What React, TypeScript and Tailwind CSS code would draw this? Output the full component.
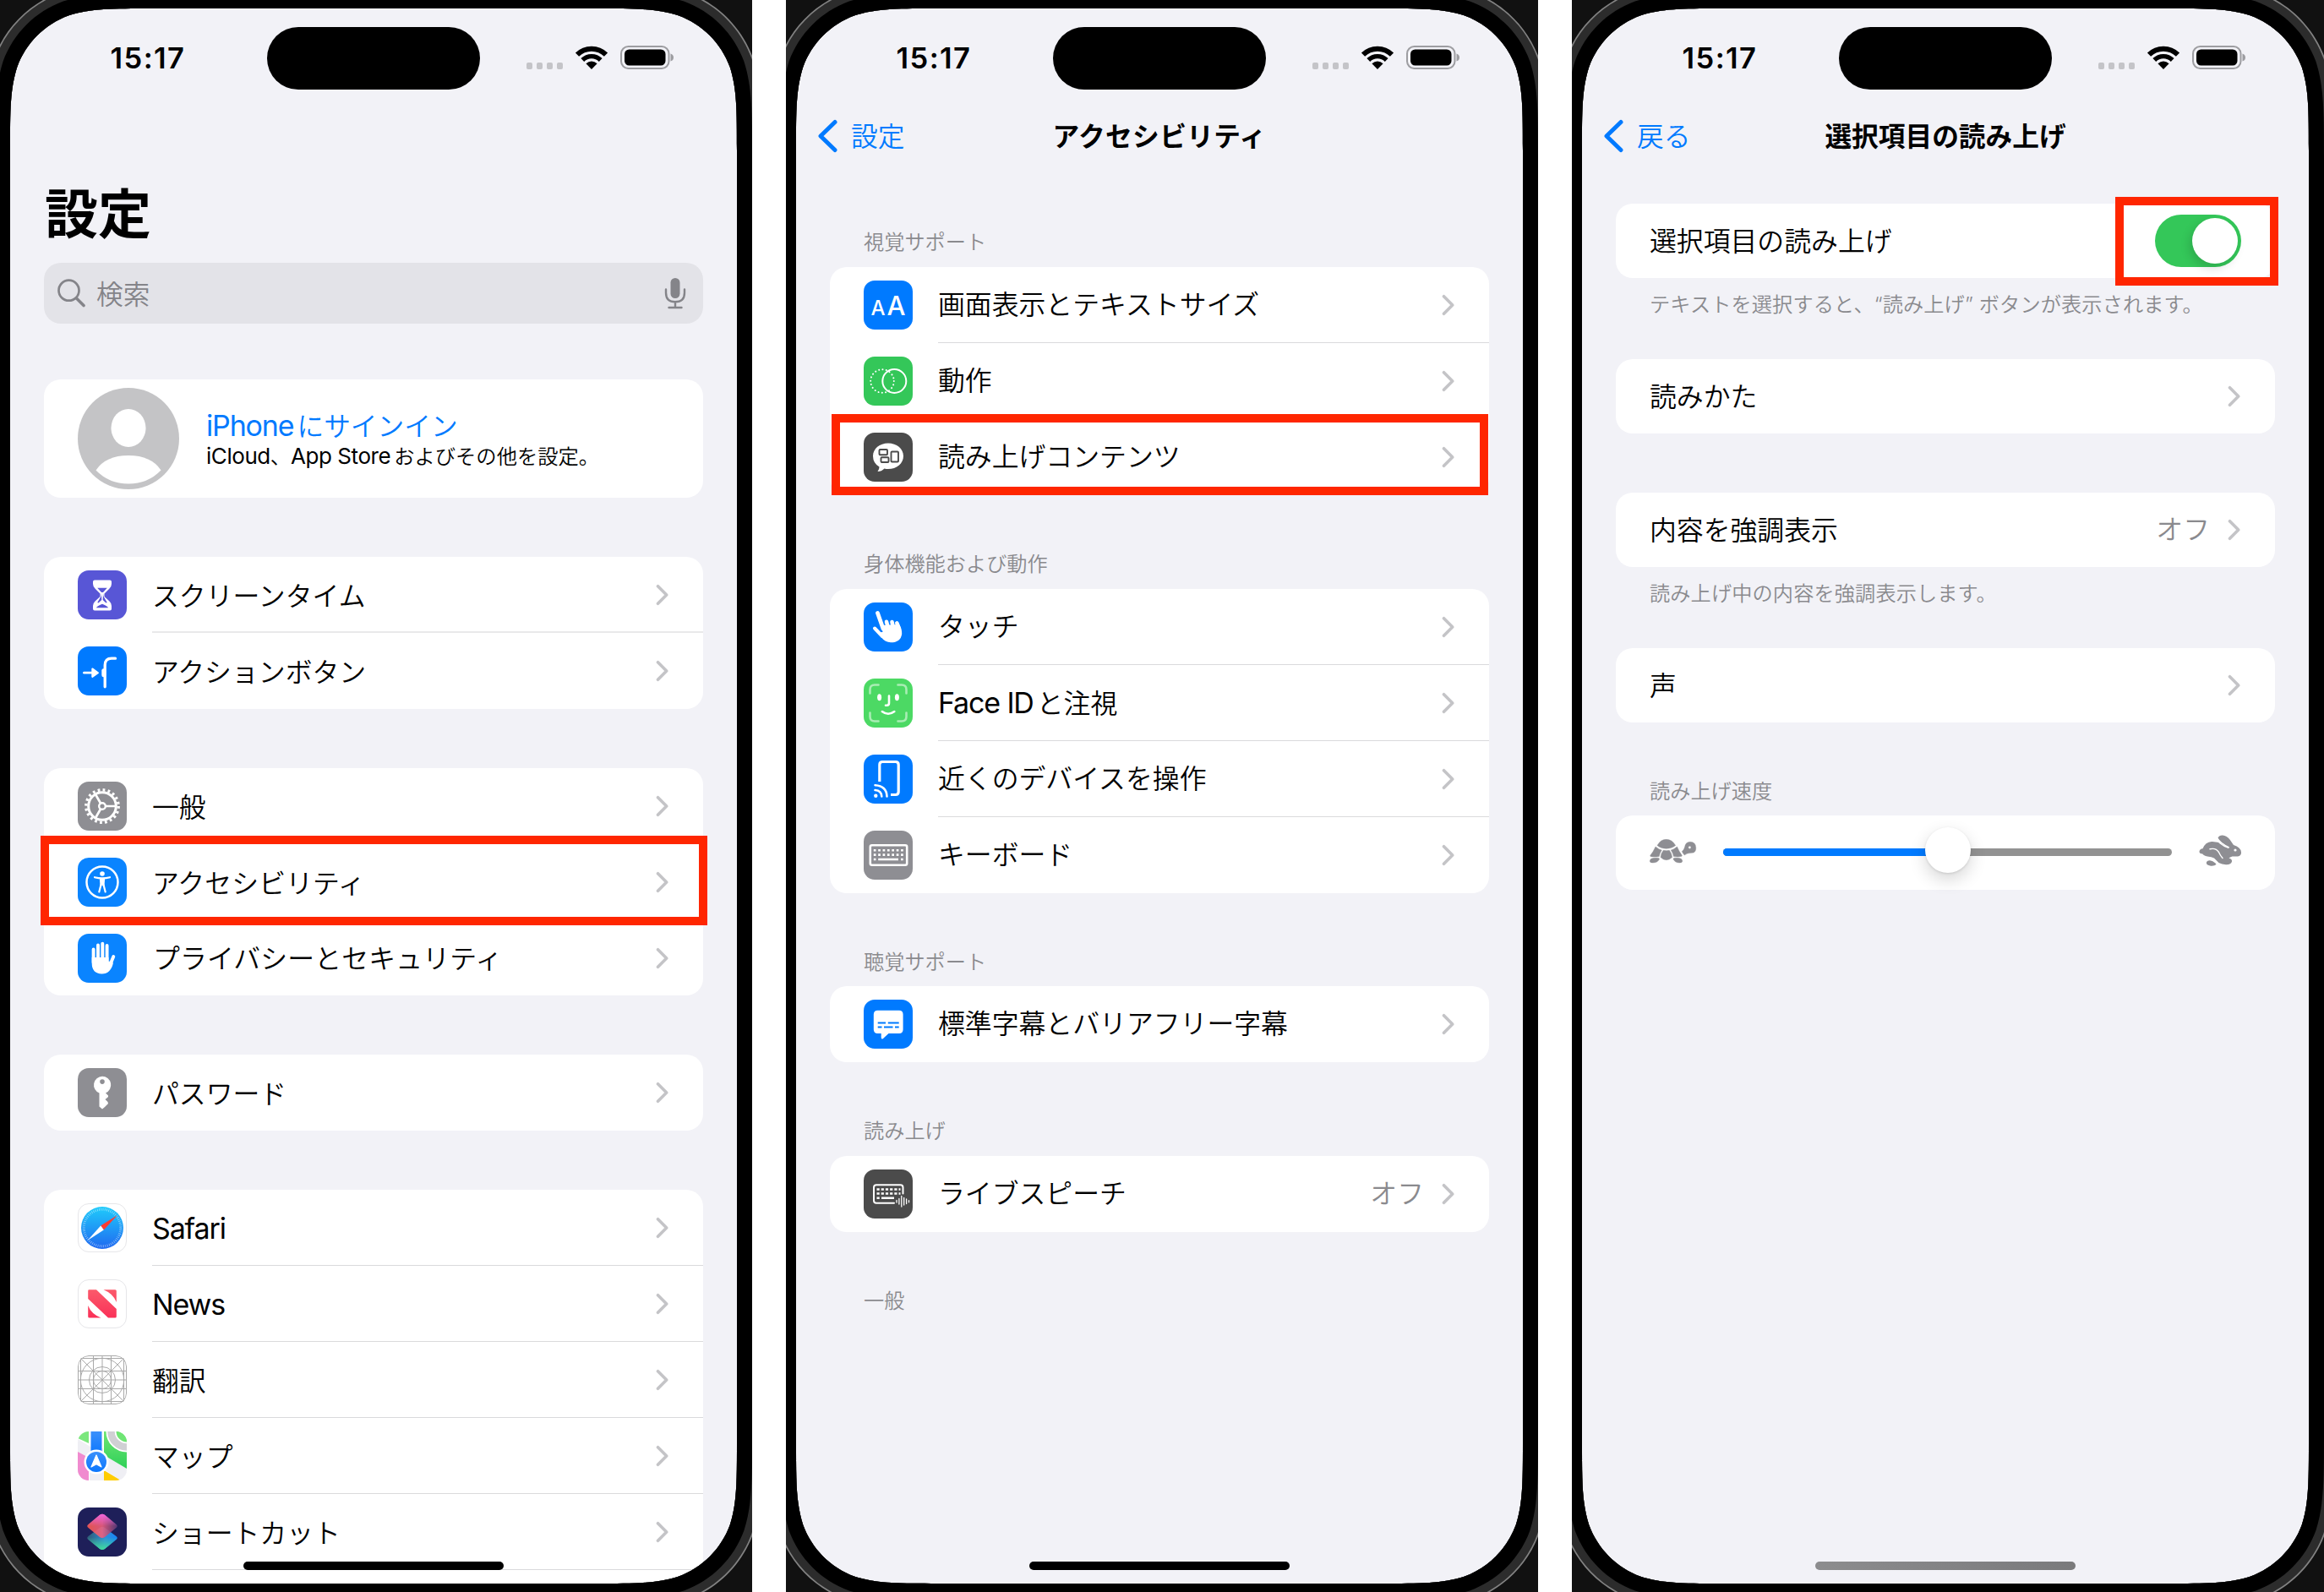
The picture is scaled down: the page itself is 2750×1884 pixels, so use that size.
import React from "react";

type Kids = { children?: React.ReactNode };

/* ---------- device frame ---------- */

function squircle(x: number, y: number, w: number, h: number, r: number) {
  const a = 1.52866 * r, b = 1.08849 * r, c = 0.86841 * r, d = 0.63149 * r, e = 0.07491 * r, f = 0.37282 * r, g = 0.16906 * r;
  const R = x + w, B = y + h;
  return [
    `M${x + a} ${y}H${R - a}`,
    `C${R - b} ${y} ${R - c} ${y} ${R - d} ${y + e}`,
    `C${R - f} ${y + g} ${R - g} ${y + f} ${R - e} ${y + d}`,
    `C${R} ${y + c} ${R} ${y + b} ${R} ${y + a}`,
    `V${B - a}`,
    `C${R} ${B - b} ${R} ${B - c} ${R - e} ${B - d}`,
    `C${R - g} ${B - f} ${R - f} ${B - g} ${R - d} ${B - e}`,
    `C${R - c} ${B} ${R - b} ${B} ${R - a} ${B}`,
    `H${x + a}`,
    `C${x + b} ${B} ${x + c} ${B} ${x + d} ${B - e}`,
    `C${x + f} ${B - g} ${x + g} ${B - f} ${x + e} ${B - d}`,
    `C${x} ${B - c} ${x} ${B - b} ${x} ${B - a}`,
    `V${y + a}`,
    `C${x} ${y + b} ${x} ${y + c} ${x + e} ${y + d}`,
    `C${x + g} ${y + f} ${x + f} ${y + g} ${x + d} ${y + e}`,
    `C${x + c} ${y} ${x + b} ${y} ${x + a} ${y}Z`,
  ].join("");
}

const ring = (o: number) => squircle(12 - o, 10 - o, 860 + 2 * o, 1864 + 2 * o, 110 + o);

function Bezel() {
  const screen = ring(0);
  return (
    <svg className="pointer-events-none absolute inset-0" width="890" height="1884" viewBox="0 0 890 1884">
      <path fillRule="evenodd" fill="#111111" d={"M0 0H890V1884H0Z" + screen} />
      <path fillRule="evenodd" fill="#828282" d={ring(29.5) + screen} />
      <path fillRule="evenodd" fill="#2c2c2c" d={ring(27.8) + screen} />
      <path fillRule="evenodd" fill="#000000" d={ring(18) + screen} />
    </svg>
  );
}

function StatusBar() {
  return (
    <div className="flex h-[106px] shrink-0 items-start">
      <div className="w-[174px] pl-[117px] pt-[46px]">
        <div className="w-[92px] whitespace-nowrap text-center text-[34.5px] font-semibold leading-[46px] tracking-[1.4px]">15:17</div>
      </div>
      <div className="ml-[130px] mt-[32px] h-[74px] w-[252px] rounded-full bg-black" />
      <div className="ml-[55px] mt-[54px] flex h-[28px] items-start">
        <div className="mt-[20px] flex gap-[5px]">
          {[0, 1, 2, 3].map((i) => (
            <span key={i} className="h-[8px] w-[7px] rounded-[2px] bg-[#c4c4c8]" />
          ))}
        </div>
        <svg className="ml-[14px]" width="40" height="28" viewBox="0 0 40 28">
          <g fill="none" stroke="#000">
            <path d="M3 10.6A24.3 24.3 0 0 1 37 10.6" strokeWidth="6" />
            <path d="M9.3 17A15.2 15.2 0 0 1 30.7 17" strokeWidth="5.4" />
          </g>
          <path d="M20 28L13.4 21.3Q16.4 18.6 20 18.6T26.600 21.3Z" />
        </svg>
        <svg className="ml-[14px]" width="64" height="28" viewBox="0 0 64 28">
          <rect x="1" y="1" width="56.500" height="26" rx="8.500" fill="none" stroke="#9d9da1" strokeWidth="2" />
          <rect x="5" y="4.500" width="48.500" height="19" rx="5.500" />
          <path d="M59.500 9.500Q63 10.500 63 14T59.500 18.500Z" fill="#9d9da1" />
        </svg>
      </div>
    </div>
  );
}

function Phone({ children, home = "bg-black" }: Kids & { home?: string }) {
  return (
    <div className="relative h-[1884px] w-[890px] shrink-0 overflow-hidden bg-[#f2f2f7]">
      <div className="flex h-full w-[872px] flex-col pl-[12px]">
        <StatusBar />
        {children}
      </div>
      <div className={"absolute left-[288px] top-[1848px] h-[10px] w-[308px] rounded-full " + home} />
      <Bezel />
    </div>
  );
}

/* ---------- list parts ---------- */

function Chevron() {
  return (
    <svg width="15" height="26" viewBox="0 0 15 26" fill="none" stroke="#c4c4c7" strokeWidth="3.600" strokeLinecap="round" strokeLinejoin="round">
      <path d="M2.500 2.700L12.700 13L2.500 23.300" />
    </svg>
  );
}

function Lat({ children }: Kids) {
  return <span className="text-[34px] font-normal tracking-[-1.15px]">{children}</span>;
}

function Card({ children, top = "mt-[70px]" }: Kids & { top?: string }) {
  return <div className={"relative mx-[40px] shrink-0 rounded-[20px] bg-white " + top}>{children}</div>;
}

function Row({ icon, label, value, sep, h = "h-[90px]", sepCls = "h-px bg-[#dadadc]", labelCls = "" }: {
  icon: React.ReactNode; label: React.ReactNode; value?: string; sep?: boolean; h?: string; sepCls?: string; labelCls?: string;
}) {
  return (
    <div className={"relative flex items-center pl-[40px] pr-[41px] " + h}>
      {icon}
      <div className={"ml-[30px] flex-1 whitespace-nowrap text-[31.85px] leading-[44px] " + labelCls}>{label}</div>
      {value && <div className="mr-[21px] text-[31.85px] text-[#8a8a8e]">{value}</div>}
      <Chevron />
      {sep && <div className={"absolute bottom-0 left-[128px] right-0 " + sepCls} />}
    </div>
  );
}

function PlainRow({ label, value, children }: Kids & { label: string; value?: string }) {
  return (
    <div className="flex h-[88px] items-center pl-[40px] pr-[40px]">
      <div className="flex-1 pt-[2px] text-[31.85px] leading-[44px]">{label}</div>
      {value && <div className="mr-[21px] text-[31.85px] text-[#8a8a8e]">{value}</div>}
      {children ?? (
        <div className="mr-px">
          <Chevron />
        </div>
      )}
    </div>
  );
}

function Caption({ children, cls }: Kids & { cls: string }) {
  return (
    <div className={"ml-[80px] h-[34px] shrink-0 whitespace-nowrap text-[24.2px] leading-[36px] text-[#8a8a8e] " + cls}>{children}</div>
  );
}

function NavBar({ back, title, titleCls = "" }: { back: string; title: string; titleCls?: string }) {
  return (
    <div className="relative mt-[32px] flex h-[46px] shrink-0 items-center justify-center">
      <div className="absolute left-[25px] top-0 flex h-[46px] items-center text-[31.7px] text-[#007aff]">
        <svg width="26" height="40" viewBox="0 0 26 40" fill="none" stroke="#007aff" strokeWidth="5" strokeLinecap="round" strokeLinejoin="round">
          <path d="M21 3.500L4 20L21 36.500" />
        </svg>
        <span className="ml-[14px] pt-[2px]">{back}</span>
      </div>
      <div className={"pt-[2px] text-[31.7px] font-bold leading-[46px] " + titleCls}>{title}</div>
    </div>
  );
}

/* ---------- icons, each on a 58px tile ---------- */

function Tile({ bg, children }: Kids & { bg: string }) {
  return (
    <div className={"h-[58px] w-[58px] shrink-0 overflow-hidden rounded-[13px] " + bg}>
      <svg width="58" height="58" viewBox="0 0 58 58">{children}</svg>
    </div>
  );
}

const Hourglass = () => (
  <Tile bg="bg-[#5856d6]">
    <path fill="#fff" d="M20 11.400H38Q40 11.400 40 13.500V16Q40 19 37.500 21.500L31.500 27.500V31L37.500 36.500Q40 39 40 42V45.500Q40 47.500 38 47.500H20Q18 47.500 18 45.500V42Q18 39 20.500 36.500L26.500 31V27.500L20.500 21.500Q18 19 18 16V13.500Q18 11.400 20 11.400Z" />
    <path fill="#5856d6" d="M23.200 20.800H34.800L30 26H28ZM22 44.300Q22.500 42.300 29 39.800Q35.500 42.300 36 44.300ZM27.600 30.500L28 27L28.300 35L24.500 38.500L23.300 38ZM30.400 30.500L30 27L29.700 35L33.500 38.500L34.700 38Z" />
  </Tile>
);

const ActionBtn = () => (
  <Tile bg="bg-[#007aff]">
    <path fill="none" stroke="#fff" strokeWidth="2.800" strokeLinecap="round" d="M7.500 31.200H17" />
    <path fill="#fff" stroke="#fff" strokeWidth="2" strokeLinejoin="round" d="M17.300 26.400L24 31.200L17.300 36Z" />
    <path fill="none" stroke="#fff" strokeWidth="3.300" strokeLinecap="round" d="M32.200 47.800V22Q32.200 14.200 40 14.200H44.500" />
    <rect x="28.300" y="26.300" width="5" height="10" rx="2.200" fill="#fff" />
  </Tile>
);

const Gear = () => (
  <Tile bg="bg-[#8e8e93]">
    <g fill="none" stroke="#fff">
      <circle cx="29" cy="29" r="16.300" strokeWidth="3" />
      <circle cx="29" cy="29" r="19.200" strokeWidth="3.400" strokeDasharray="2.800 3.232" />
      <circle cx="29" cy="29" r="3.800" strokeWidth="2.400" />
      <path strokeWidth="2.700" d="M33 29H45.500M27 25.500L20.800 14.800M27 32.500L20.800 43.200" />
    </g>
  </Tile>
);

const Access = () => (
  <Tile bg="bg-[#0a84ff]">
    <circle cx="29" cy="29" r="18.500" fill="none" stroke="#fff" strokeWidth="2.500" />
    <circle cx="29" cy="19" r="2.800" fill="#fff" />
    <path fill="none" stroke="#fff" strokeWidth="2.200" strokeLinecap="round" strokeLinejoin="round" d="M20 23.200Q29 25.500 38 23.200M27.500 32L25.300 40.500M30.500 32L32.700 40.500" />
    <path fill="#fff" d="M25.800 24H32.200L31.500 33.500H29.600L29 31.500L28.400 33.500H26.500Z" />
  </Tile>
);

const Hand = () => (
  <Tile bg="bg-[#0a84ff]">
    <path fill="none" stroke="#fff" strokeWidth="3.900" strokeLinecap="round" d="M18.600 18.500V34M24 13.500V30M29.300 11.800V30M34.600 14V32M42.300 27L38.200 37" />
    <path fill="#fff" d="M16.700 28H36.500V32.500L38.500 33L42 34.500Q39 47.500 28.500 47.500Q16.700 47 16.700 35Z" />
  </Tile>
);

const KeyIcon = () => (
  <Tile bg="bg-[#8e8e93]">
    <path fill="#fff" fillRule="evenodd" d="M29 9.800A10.200 10.200 0 0 1 33 29.400L36 32.500Q36.500 34 35 35L32.500 37L35.500 40L36 42L32 46L29 48.500L25.500 45.500V29.500A10.200 10.200 0 0 1 29 9.800ZM29 13.300A2.800 2.800 0 1 0 29 18.900A2.800 2.800 0 0 0 29 13.300Z" />
  </Tile>
);

const Safari = () => (
  <Tile bg="border border-[#e6e6e9] bg-white">
    <defs>
      <linearGradient id="sf" x1="0" y1="0" x2="0" y2="1">
        <stop offset="0" stopColor="#1fcbfb" />
        <stop offset="1" stopColor="#2069f0" />
      </linearGradient>
    </defs>
    <g transform="translate(-1 -1)">
      <circle cx="29" cy="29" r="25" fill="url(#sf)" />
      <circle cx="29" cy="29" r="21.800" fill="none" stroke="#fff" strokeOpacity=".55" strokeWidth="3" strokeDasharray=".7 1.583" />
      <path fill="#ff3b30" d="M47 14L30.800 31.500L27.200 26.500Z" />
      <path fill="#fff" d="M11.500 44L30.800 31.500L27.200 26.500Z" />
    </g>
  </Tile>
);

const News = () => (
  <Tile bg="border border-[#e6e6e9] bg-white">
    <defs>
      <linearGradient id="nw" x1="0" y1="0" x2="0" y2="1">
        <stop offset="0" stopColor="#fb5a6b" />
        <stop offset="1" stopColor="#fa3158" />
      </linearGradient>
    </defs>
    <path transform="translate(-1 -1)" fill="url(#nw)" d="M13.500 12.300H22L45.800 35V44Q45.800 45.500 44.300 45.500H36L12.200 23V13.500Q12.200 12.300 13.500 12.300ZM30.500 12.300H44.300Q45.800 12.300 45.800 13.800V27Q42 17 30.500 12.300ZM12.200 31Q16 41 27.500 45.500H13.700Q12.200 45.500 12.200 44Z" />
  </Tile>
);

const Translate = () => (
  <Tile bg="bg-white">
    <g fill="none" stroke="#a9a9a9" strokeWidth="1">
      <rect x=".5" y=".5" width="57" height="57" rx="12.500" />
      <circle cx="29" cy="29" r="25.700" />
      <circle cx="29" cy="29" r="15.500" />
      <circle cx="29" cy="29" r="10.500" />
      <path d="M3.500 0V58M18.500 0V58M29 0V58M39.500 0V58M54.500 0V58M0 3.500H58M0 18.500H58M0 29H58M0 39.500H58M0 54.500H58M3 3L55 55M55 3L3 55" />
    </g>
  </Tile>
);

const Maps = () => (
  <Tile bg="bg-[#efeff4]">
    <defs>
      <linearGradient id="mg" x1="0" y1="0" x2="0" y2="1">
        <stop offset="0" stopColor="#6fe574" />
        <stop offset="1" stopColor="#2fd058" />
      </linearGradient>
      <linearGradient id="mb" x1="0" y1="0" x2="0" y2="1">
        <stop offset="0" stopColor="#3b90fb" />
        <stop offset="1" stopColor="#0a76fe" />
      </linearGradient>
    </defs>
    <path fill="#fff" d="M0 0H58V58H52L30 45V58H13V31L0 24Z" />
    <path fill="#efeff4" d="M0 9L58 44V58H51L0 24ZM14 20H30V58H14Z" />
    <path fill="#7be77d" d="M0 0H13V14L0 8Z" />
    <path fill="url(#mg)" d="M31 0H58V44L31 28Z" />
    <circle cx="58" cy="0" r="18.500" fill="#6fe574" stroke="#fff" strokeWidth="12" />
    <circle cx="58" cy="0" r="18.500" fill="none" stroke="#d0d0d4" strokeWidth="8.500" />
    <path fill="#f08bcf" d="M0 24L13 31V58H0Z" />
    <path fill="#ffcc00" d="M31 46L51 58H31Z" />
    <rect x="15.500" y="0" width="13" height="28" fill="url(#mb)" />
    <circle cx="22" cy="36" r="14.500" fill="#fff" />
    <circle cx="22" cy="36" r="12" fill="url(#mb)" />
    <path fill="#fff" stroke="#fff" strokeWidth="1.200" strokeLinejoin="round" d="M22 28L28 42L22 38.800L16 42Z" />
  </Tile>
);

const diamondLow = "M26 24Q29 22 32 24L45.500 34Q48 36 45.500 38L32 49Q29 51 26 49L12.500 38Q10 36 12.500 34Z";
const diamondHigh = "M26 8.700Q29 7 32 8.700L45.500 20Q48 22 45.500 24L32 35Q29 37 26 35L12.500 24Q10 22 12.500 20Z";

const Shortcuts = () => (
  <Tile bg="bg-[#1e1f59]">
    <defs>
      <linearGradient id="s1" x1="0" y1=".5" x2="1" y2=".5">
        <stop offset="0" stopColor="#ff5b4e" />
        <stop offset=".5" stopColor="#f25f7e" />
        <stop offset="1" stopColor="#5a3a78" />
      </linearGradient>
      <linearGradient id="s1b" x1="0" y1="0" x2="0" y2="1">
        <stop offset="0" stopColor="#f065dd" />
        <stop offset=".5" stopColor="#f065dd" stopOpacity="0" />
      </linearGradient>
      <linearGradient id="s2" x1="0" y1=".4" x2="1" y2=".5">
        <stop offset="0" stopColor="#2f5b74" />
        <stop offset=".6" stopColor="#2f8fd8" />
        <stop offset="1" stopColor="#1483f8" />
      </linearGradient>
      <linearGradient id="s2b" x1="0" y1="0" x2="0" y2="1">
        <stop offset=".45" stopColor="#41dd9a" stopOpacity="0" />
        <stop offset="1" stopColor="#41dd9a" />
      </linearGradient>
    </defs>
    <path fill="url(#s2)" d={diamondLow} />
    <path fill="url(#s2b)" d={diamondLow} />
    <path fill="url(#s1)" fillOpacity=".88" d={diamondHigh} />
    <path fill="url(#s1b)" d={diamondHigh} />
  </Tile>
);

const TextSize = () => (
  <div className="flex h-[58px] w-[58px] shrink-0 items-baseline justify-center gap-[2px] rounded-[13px] bg-[#007aff] pt-[8px] font-medium leading-[44px] text-white">
    <span className="text-[24px]">A</span>
    <span className="text-[31px]">A</span>
  </div>
);

const Motion = () => (
  <Tile bg="bg-[#34c759]">
    <g fill="none" stroke="#fff">
      <circle cx="36.300" cy="29" r="14" strokeWidth="2" />
      <circle cx="22" cy="29" r="13.800" strokeWidth="2" strokeLinecap="round" strokeDasharray=".1 4.235" />
    </g>
  </Tile>
);

const Spoken = () => (
  <Tile bg="bg-[#4b4b4b]">
    <path fill="#fff" d="M29 12.500C39 12.500 47 19 47 27.700S39 43 29 43Q26.500 43 24.500 42.500Q21 46 16.500 46Q18.500 43.500 18.500 40.500Q11 36 11 27.700C11 19 19 12.500 29 12.500Z" />
    <g fill="none" stroke="#4b4b4b" strokeWidth="1.900">
      <rect x="18.500" y="20" width="9.500" height="6.300" rx="1" />
      <rect x="20.500" y="29.300" width="9" height="5.700" rx="1" />
      <rect x="32.500" y="22.500" width="8.500" height="12" rx="1" />
    </g>
  </Tile>
);

const Touch = () => (
  <Tile bg="bg-[#007aff]">
    <g fill="none" stroke="#fff" strokeLinecap="round">
      <path strokeWidth="4.800" d="M16.500 12.500L23 31" />
      <path strokeWidth="4" d="M13 30.500L22 40" />
      <path strokeWidth="4.600" d="M27 22.800L29 30M33.500 23L35 30M39.300 24.300L42 31" />
    </g>
    <path fill="#fff" d="M21 27L42 26Q45.500 32 45.200 37Q44 47.300 32 47.300Q25.500 47 21 41.500L16 35.500L22.500 35Z" />
  </Tile>
);

const FaceId = () => (
  <Tile bg="bg-[#4cd964]">
    <g fill="none" strokeLinecap="round" strokeWidth="2.600">
      <path stroke="#a9edb4" d="M7.500 17.500V13Q7.500 7.500 13 7.500H17.500M40.500 7.500H45Q50.500 7.500 50.500 13V17.500M50.500 40.500V45Q50.500 50.500 45 50.500H40.500M17.500 50.500H13Q7.500 50.500 7.500 45V40.500" />
      <path stroke="#fff" d="M30 20.500V29Q30 31.700 27.500 31.700H26M21.800 39Q29 44.500 36.300 39" />
    </g>
    <ellipse cx="18.600" cy="22.300" rx="2.500" ry="4" fill="#fff" />
    <ellipse cx="39.400" cy="22.300" rx="2.500" ry="4" fill="#fff" />
  </Tile>
);

const Nearby = () => (
  <Tile bg="bg-[#007aff]">
    <g fill="none" stroke="#fff" strokeWidth="3.200" strokeLinecap="butt">
      <path d="M18.800 32V12Q18.800 8.500 22.300 8.500H37.700Q41.200 8.500 41.200 12V44Q41.200 47.500 37.700 47.500H32" />
      <path strokeWidth="2.600" strokeLinecap="round" d="M13.500 36.200Q27 37 27.500 49.500M13.500 42Q21 42.500 21.300 49.500" />
    </g>
    <circle cx="14.300" cy="48.700" r="2.200" fill="#fff" />
  </Tile>
);

const Keyboard = () => (
  <Tile bg="bg-[#8e8e93]">
    <rect x="7.800" y="17.300" width="43.400" height="23.400" rx="2" fill="none" stroke="#fff" strokeWidth="2.600" />
    <path stroke="#fff" strokeWidth="2.600" strokeDasharray="2.700 2.680" d="M11.800 23.300H47M11.800 28.600H47" />
    <path stroke="#fff" strokeWidth="2.600" d="M11.800 34H14.500M17.200 34H41M44 34H46.700" />
  </Tile>
);

const Subtitles = () => (
  <Tile bg="bg-[#007aff]">
    <path fill="#fff" d="M16.500 12.700H42Q46.600 12.700 46.600 17.500V35.200Q46.600 40 42 40H29.500L23 46Q20.700 47.500 20.700 44.500V40H16.500Q11.800 40 11.800 35.200V17.500Q11.800 12.700 16.500 12.700Z" />
    <path stroke="#007aff" strokeWidth="2.200" d="M16.700 27.500H26M28.800 27.500H41.700M16.700 32.500H21.500M24 32.500H34.500M37 32.500H41.700" />
  </Tile>
);

const LiveSpeech = () => (
  <Tile bg="bg-[#4b4b4b]">
    <path fill="none" stroke="#fff" strokeWidth="2" strokeLinecap="round" d="M36 39.800H15Q12 39.800 12 36.800V21.200Q12 18.200 15 18.200H43.500Q46.500 18.200 46.500 21.200V28.500" />
    <path stroke="#fff" strokeWidth="2.600" strokeDasharray="3.200 2" d="M15.500 23.500H43.500M15.500 28.500H43.500" />
    <path stroke="#fff" strokeWidth="2.600" d="M15.500 33.800H18.700M21 33.800H36" />
    <path stroke="#fff" strokeWidth="1.300" strokeLinecap="round" d="M39 36.500V39M41.900 34.500V41M44.800 31.500V44M47.700 33.500V42M50.600 35V40.500M53.500 36.700V38.800" />
  </Tile>
);

function Turtle() {
  return (
    <svg width="56" height="29" viewBox="0 0 56 29" fill="#8e8e93" stroke="#8e8e93" strokeWidth=".4">
      <path d="M9 7.500Q13 .3 19.700 .3T30.700 7.500Q26 11.300 19.700 11.300T9 7.500Z" />
      <path d="M7 9Q10.500 12 14.300 13Q12 16.500 11.300 20.500Q5 21.500 1 20.500Q.3 19.800 1 19Q4 15.500 7 9Z" />
      <path d="M32.500 9Q29 12 25.300 13Q27.600 16.500 28.400 20.500Q34 21.500 38 20.300Q38.700 19.600 38 18.800Q35 15 32.500 9Z" />
      <path d="M16.300 13.300Q20 14 23.300 13.300Q26 16.500 26.700 21.500Q23.500 24.700 19.800 24.700T13 21.500Q13.500 16.500 16.300 13.300Z" />
      <path d="M6.500 22.300Q12 21.800 11.500 23.800Q9.500 28 3.500 28Q0 28 .3 25.500Q1 22.500 6.500 22.300ZM33 22.300Q27.500 21.800 28 23.800Q30 28 35.500 28Q39 28 38.700 25.500Q38 22.500 33 22.300Z" />
      <path fillRule="evenodd" d="M38.300 14.700Q41 12.500 41.500 9.500Q42.500 3.300 48 3.300Q54.800 3.500 54.800 10.500Q54.800 16.300 50 16.300Q44 16.500 41.300 19Q39.800 17.500 38.300 14.700ZM47.400 8.200A1.600 1.600 0 1 0 47.400 11.400A1.600 1.600 0 0 0 47.400 8.200Z" />
    </svg>
  );
}

function Rabbit() {
  return (
    <svg width="51" height="38" viewBox="0 0 51 38" fill="#8e8e93">
      <path d="M22.500 3.500Q24 .3 28 .5Q33 .8 36.500 5.500L41 12Q49.500 14.500 50 20.500Q50.300 25 46 25.500H39.500Q36.500 26.500 35.500 27.500Q39.500 28.500 39 31.500Q38 35.500 32 35.300Q27 35 23.500 33L18 27.500Q15 26 10 25.500Q5.500 24.500 4.300 22.500Q.3 22.500 .5 19.500Q1 16.500 4.500 16.300Q7.500 8.500 15 8Q22 7.800 27 10.500Q31 13.500 34.500 15L36.500 14.500Q25.500 9.500 22.500 3.500Z" />
      <path fill="none" stroke="#fff" strokeWidth="1.400" strokeLinecap="round" d="M13 16.800Q20 15 23.500 20.500Q25 24 28 27.500M24.500 9.500Q29.500 13.800 35 15.200" />
      <circle cx="43" cy="18" r="1.600" fill="#fff" />
      <path d="M9 32Q10.500 29.800 14 30.500Q19 32 20.500 35Q18 37.200 13 36.500Q8 35.500 9 32Z" />
    </svg>
  );
}

/* ---------- screens ---------- */

function SettingsScreen() {
  return (
    <Phone>
      <div className="ml-[41px] mt-[107px] h-[80px] shrink-0 text-[63px] font-bold leading-[80px]">設定</div>
      <div className="mx-[40px] mt-[18px] flex h-[72px] shrink-0 items-center rounded-[20px] bg-[#e3e3e8] pl-[16px] pr-[20px]">
        <svg width="34" height="34" viewBox="0 0 34 34" fill="none" stroke="#848489" strokeLinecap="round">
          <circle cx="13.500" cy="13.700" r="12" strokeWidth="2.700" />
          <path strokeWidth="3.600" d="M22.500 23L31 31.500" />
        </svg>
        <div className="ml-[12px] flex-1 pt-[3px] text-[31.7px] leading-[44px] text-[#848489]">検索</div>
        <svg width="26" height="38" viewBox="0 0 26 38" fill="none" stroke="#848489" strokeWidth="2.400" strokeLinecap="round">
          <rect x="7.500" y="1" width="11" height="24" rx="5.500" fill="#848489" stroke="none" />
          <path d="M2 14.500V18.500Q2 29.300 13 29.300T24 18.500V14.500M13 29.500V36M5.500 36H20.500" />
        </svg>
      </div>
      <Card top="mt-[66px]">
        <div className="flex h-[140px] items-center pl-[40px]">
          <svg width="120" height="120" viewBox="0 0 120 120">
            <circle cx="60" cy="60" r="60" fill="#c4c4c6" />
            <ellipse cx="60" cy="47.500" rx="20.500" ry="22.500" fill="#fff" />
            <path fill="#fff" d="M21.500 97.500Q33 80 60 80T98.500 97.500Q83 113.500 60 113.500T21.500 97.500Z" />
          </svg>
          <div className="ml-[32px] whitespace-nowrap pt-[2px]">
            <div className="h-[40px] text-[29.5px] leading-[40px] text-[#007aff]">
              <Lat>iPhone</Lat>
              <span className="ml-[4px] text-[31.7px]">にサインイン</span>
            </div>
            <div className="h-[32px] text-[24.3px] leading-[32px]">
              <span className="text-[26px] font-normal tracking-[-0.45px]">iCloud</span>、
              <span className="text-[26px] font-normal tracking-[-0.45px]">App Store</span>
              <span className="ml-[4px]">およびその他を設定。</span>
            </div>
          </div>
        </div>
      </Card>
      <Card>
        <Row labelCls="pt-[3px]" icon={<Hourglass />} label="スクリーンタイム" sep sepCls="h-[2px] bg-[#e9e9ea]" />
        <Row labelCls="pt-[3px]" icon={<ActionBtn />} label="アクションボタン" />
      </Card>
      <Card>
        <Row labelCls="pt-[3px]" icon={<Gear />} label="一般" />
        <Row labelCls="pt-[3px] tracking-[0.1px]" icon={<Access />} label="アクセシビリティ" />
        <Row labelCls="pt-[2px] pl-px tracking-[0.15px]" icon={<Hand />} label="プライバシーとセキュリティ" h="h-[89px]" />
        <div className="absolute left-[-4px] top-[80px] h-[106px] w-[789px] border-[10px] border-[#ff2600]" />
      </Card>
      <Card>
        <Row labelCls="pt-[3px]" icon={<KeyIcon />} label="パスワード" />
      </Card>
      <Card>
        <Row labelCls="pt-[3px]" icon={<Safari />} label={<Lat>Safari</Lat>} sep />
        <Row labelCls="pt-[3px]" icon={<News />} label={<Lat>News</Lat>} sep />
        <Row labelCls="pt-[3px]" icon={<Translate />} label="翻訳" sep />
        <Row labelCls="pt-[3px]" icon={<Maps />} label="マップ" sep />
        <Row labelCls="pt-[3px]" icon={<Shortcuts />} label="ショートカット" sep />
        <div className="h-[40px]" />
      </Card>
    </Phone>
  );
}

function AccessibilityScreen() {
  return (
    <Phone>
      <NavBar back="設定" title="アクセシビリティ" titleCls="tracking-[0.35px]" />
      <Caption cls="mt-[85px]">視覚サポート</Caption>
      <Card top="mt-[13px]">
        <Row icon={<TextSize />} label="画面表示とテキストサイズ" sep />
        <Row icon={<Motion />} label="動作" />
        <Row icon={<Spoken />} label="読み上げコンテンツ" />
        <div className="absolute left-[2px] top-[174px] h-[96px] w-[777px] border-[10px] border-[#ff2600]" />
      </Card>
      <Caption cls="mt-[64px]">身体機能および動作</Caption>
      <Card top="mt-[13px]">
        <Row icon={<Touch />} label="タッチ" sep />
        <Row icon={<FaceId />} label={<><Lat>Face ID</Lat><span className="ml-[4px]">と注視</span></>} sep />
        <Row icon={<Nearby />} label="近くのデバイスを操作" sep />
        <Row icon={<Keyboard />} label="キーボード" />
      </Card>
      <Caption cls="mt-[64px]">聴覚サポート</Caption>
      <Card top="mt-[12px]">
        <Row icon={<Subtitles />} label="標準字幕とバリアフリー字幕" />
      </Card>
      <Caption cls="mt-[64px]">読み上げ</Caption>
      <Card top="mt-[13px]">
        <Row icon={<LiveSpeech />} label="ライブスピーチ" value="オフ" />
      </Card>
      <Caption cls="mt-[64px]">一般</Caption>
    </Phone>
  );
}

function SpeakSelectionScreen() {
  return (
    <Phone home="bg-linear-to-r from-[#8c8c8e] to-[#7a7a7c]">
      <NavBar back="戻る" title="選択項目の読み上げ" />
      <Card top="mt-[57px]">
        <PlainRow label="選択項目の読み上げ">
          <div className="flex h-[62px] w-[102px] items-center justify-end rounded-full bg-[#34c759] pr-[4px]">
            <div className="h-[54px] w-[54px] rounded-full bg-white shadow-[-3px_5px_12px_rgba(0,0,0,0.15)]" />
          </div>
        </PlainRow>
        <div className="absolute left-[591px] top-[-8px] h-[105px] w-[193px] border-[10px] border-[#ff2600]" />
      </Card>
      <Caption cls="mt-[14px] tracking-[0.12px]">テキストを選択すると、“読み上げ” ボタンが表示されます。</Caption>
      <Card top="mt-[48px]">
        <PlainRow label="読みかた" />
      </Card>
      <Card>
        <PlainRow label="内容を強調表示" value="オフ" />
      </Card>
      <Caption cls="mt-[14px] tracking-[0.12px]">読み上げ中の内容を強調表示します。</Caption>
      <Card top="mt-[48px]">
        <PlainRow label="声" />
      </Card>
      <Caption cls="mt-[64px]">読み上げ速度</Caption>
      <Card top="mt-[12px]">
        <div className="flex h-[88px] items-center pl-[40px] pr-[38px]">
          <div className="pb-[4px]">
            <Turtle />
          </div>
          <div className="relative mb-[2px] ml-[31px] h-[9px] w-[531px] rounded-full bg-[#929292]">
            <div className="h-full w-1/2 rounded-l-full bg-[#007aff]" />
            <div className="absolute left-[239px] top-[-25px] h-[54px] w-[54px] rounded-full bg-white shadow-[0_8px_20px_rgba(0,0,0,0.16),0_1px_3px_rgba(0,0,0,0.12)]" />
          </div>
          <div className="ml-[32px] pb-[4px]">
            <Rabbit />
          </div>
        </div>
      </Card>
    </Phone>
  );
}

export default function App() {
  return (
    <div lang="ja" className="flex h-[1884px] w-[2750px] gap-[40px] overflow-hidden bg-white font-['Inter','Noto_Sans_CJK_JP',sans-serif] font-[350] text-black">
      <SettingsScreen />
      <AccessibilityScreen />
      <SpeakSelectionScreen />
    </div>
  );
}
